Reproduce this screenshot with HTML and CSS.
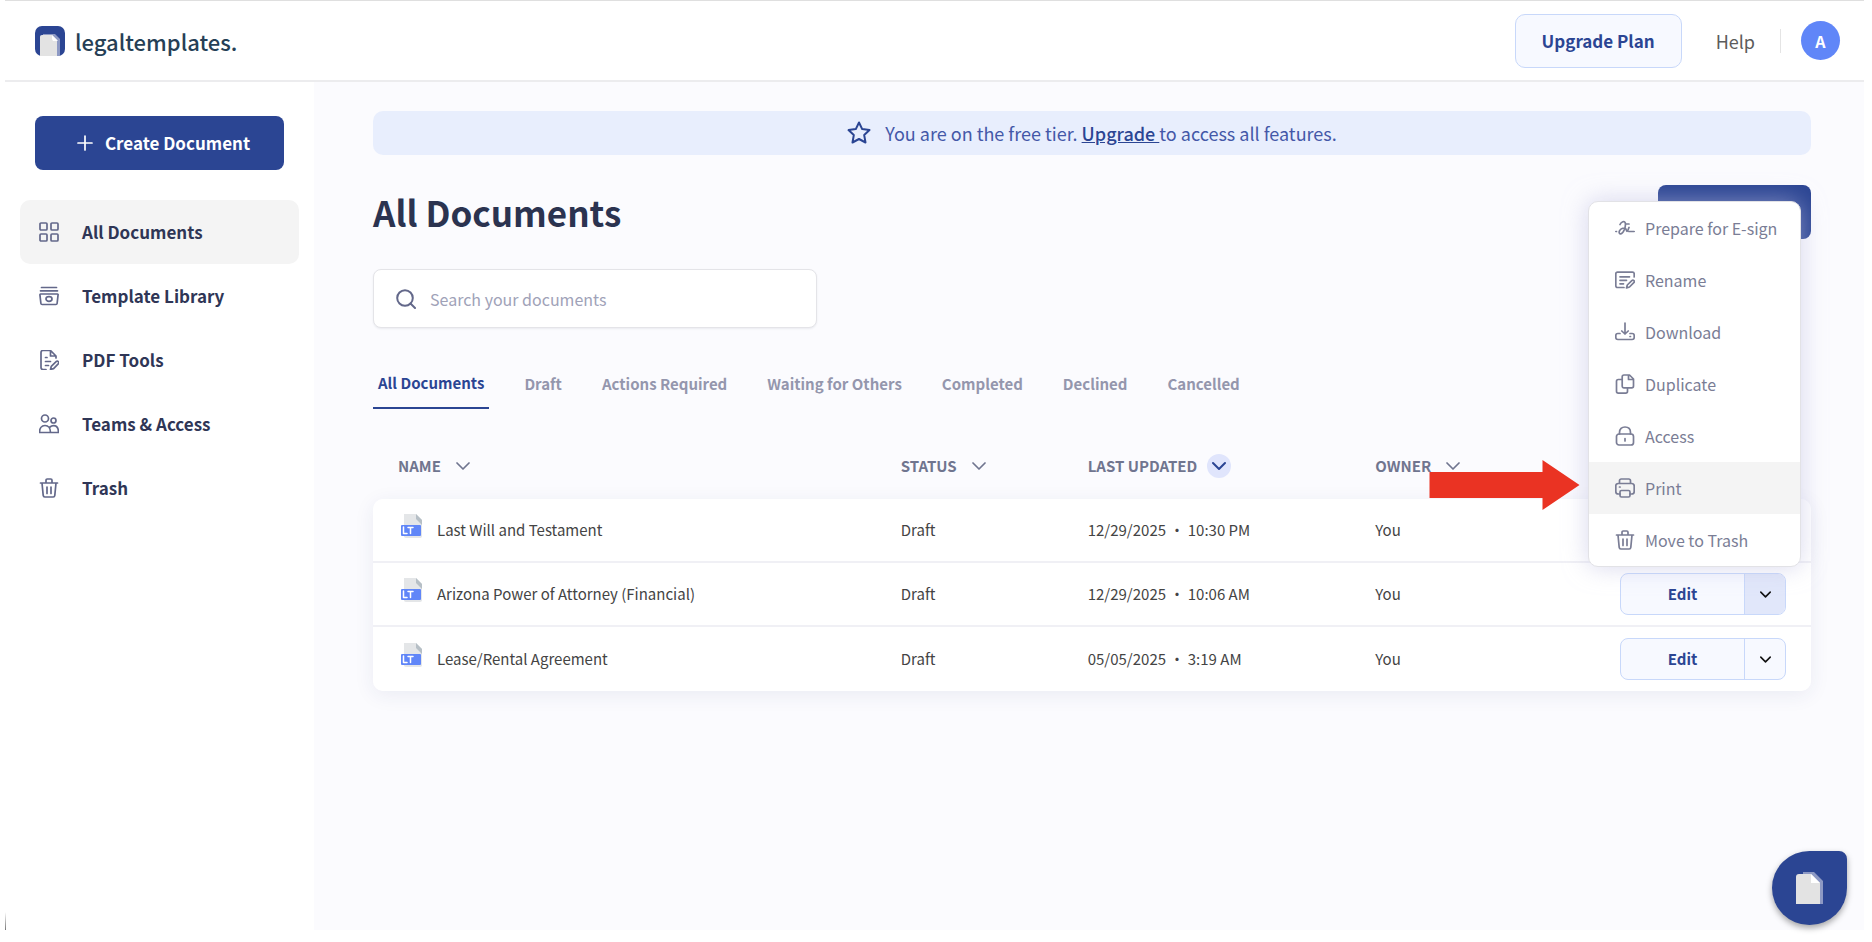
FILE: index.html
```html
<!DOCTYPE html>
<html lang="en">
<head>
    <meta charset="UTF-8">
    <meta name="viewport" content="width=device-width, initial-scale=1.0">
    <title>All Documents - legaltemplates.</title>
    <link rel="stylesheet" href="styles.css">
</head>
<body>

    <!-- Shared icons -->
    <svg class="sprite" aria-hidden="true">
        <symbol id="icon-chevron" viewBox="0 0 14 14"><path d="M1 4l6 6 6-6"/></symbol>
        <symbol id="icon-trash" viewBox="0 0 20 20"><path d="M1.5 5h17M3 5l1.2 12.4c.1.9.7 1.6 1.6 1.6h8.4c.9 0 1.500-.7 1.600-1.600L17 5M7 5V2.300C7 1.500 7.500 1 8.200 1h3.600c.7 0 1.200.5 1.200 1.300V5M8 9v6.500M12 9v6.500"/></symbol>
        <symbol id="icon-file" viewBox="0 0 24 26">
            <path d="M4 1h12l6 6v16c0 1-.6 2-2 2H6c-1.400 0-2-1-2-2z" fill="#e4e6e8"/>
            <path d="M16 1l6 6v5l-6-6z" fill="#b6bfc6"/>
            <rect x="1" y="12" width="20" height="11" rx="1" fill="#6086f8"/>
            <path d="M3.500 14v6.500h3.500M8 14.500h5M10.500 14.500v6" fill="none" stroke="#fff" stroke-width="1.500"/>
        </symbol>
    </svg>

    <div class="app">
        <header class="header">
            <a href="#" class="logo">
                <svg class="logo-icon" viewBox="0 0 30 30">
                    <rect width="30" height="30" rx="7" fill="#2b4593"/>
                    <path d="M8 8h12l5 5v17H8z" fill="#8d99c4"/>
                    <path d="M7 9h10l5 5v16H5V11c0-1.300.7-2 2-2z" fill="#e3e3e3"/>
                    <path d="M17 9l6 6h-5l-1-2z" fill="#fff"/>
                </svg>
                legaltemplates.
            </a>
            <div class="header-actions">
                <button type="button" class="btn-upgrade">Upgrade Plan</button>
                <a href="#" class="help">Help</a>
                <button type="button" class="avatar" aria-label="Account">A</button>
            </div>
        </header>

        <div class="layout">
            <aside class="sidebar">
                <button type="button" class="btn-create">
                    <svg viewBox="0 0 16 16"><path d="M8 1v14M1 8h14"/></svg>
                    Create Document
                </button>
                <nav class="nav">
                    <a href="#" class="nav-item active">
                        <svg viewBox="0 0 20 20"><rect x="1" y="1" width="7" height="7" rx="1"/><rect x="12" y="1" width="7" height="7" rx="1"/><rect x="1" y="12" width="7" height="7" rx="1"/><rect x="12" y="12" width="7" height="7" rx="1"/></svg>
                        All Documents
                    </a>
                    <a href="#" class="nav-item">
                        <svg viewBox="0 0 20 20"><path d="M2.500 1.500h15M1.500 4.800h17M1.500 8h17c.4 0 .7.300.600.700l-1 8.800c-.1.700-.5 1-1.200 1H3.100c-.7 0-1.100-.3-1.200-1l-1-8.800c0-.4.200-.7.600-.7z"/><ellipse cx="10" cy="13" rx="3" ry="2.300"/></svg>
                        Template Library
                    </a>
                    <a href="#" class="nav-item">
                        <svg viewBox="0 0 20 20"><path d="M7 19.500H4c-1 0-2-.8-2-2V2.500c0-1.200.8-2 2-2h7.500l5.500 5.500v2M11.500.500V6H17M6.500 7.500h1.500M6.500 11.500h5M6.500 15.500h3M11.500 19.500l.8-3.200 4.800-4.600c.7-.7 1.700-.6 2.200 0 .6.600.5 1.500-.1 2.200l-4.600 4.700z"/></svg>
                        PDF Tools
                    </a>
                    <a href="#" class="nav-item">
                        <svg viewBox="0 0 20 20"><circle cx="6" cy="4.500" r="3.500"/><circle cx="14.500" cy="6.500" r="2.500"/><path d="M.5 18.500c0-4 2-7 5.500-7s5.500 3 5.500 7zM11 13c1-.9 2-1.300 3.500-1.300 3 0 5 2.500 5 6.800h-8"/></svg>
                        Teams &amp; Access
                    </a>
                    <a href="#" class="nav-item">
                        <svg><use href="#icon-trash"/></svg>
                        Trash
                    </a>
                </nav>
            </aside>

            <main class="main">
                <div class="banner">
                    <svg viewBox="0 0 24 24"><path d="M12 1.500l3.200 6.600 7.300 1-5.300 5 1.300 7.400L12 18l-6.500 3.500 1.300-7.400-5.300-5 7.300-1z"/></svg>
                    <p>You are on the free tier. <a href="#">Upgrade </a>to access all features.</p>
                </div>

                <div class="title-row">
                    <h1>All Documents</h1>
                    <button type="button" class="btn-new" aria-label="Create"></button>
                </div>

                <label class="search">
                    <svg viewBox="0 0 20 20"><circle cx="9" cy="9" r="7.800"/><path d="M14.500 14.500l4.500 4.500"/></svg>
                    <input type="search" placeholder="Search your documents" aria-label="Search your documents">
                </label>

                <div class="tabs">
                    <button type="button" class="tab active">All Documents</button>
                    <button type="button" class="tab">Draft</button>
                    <button type="button" class="tab">Actions Required</button>
                    <button type="button" class="tab">Waiting for Others</button>
                    <button type="button" class="tab">Completed</button>
                    <button type="button" class="tab">Declined</button>
                    <button type="button" class="tab">Cancelled</button>
                </div>

                <table class="documents">
                    <thead>
                        <tr>
                            <th class="col-name"><button type="button" class="sort">NAME <span><svg><use href="#icon-chevron"/></svg></span></button></th>
                            <th class="col-status"><button type="button" class="sort">STATUS <span><svg><use href="#icon-chevron"/></svg></span></button></th>
                            <th class="col-updated"><button type="button" class="sort sorted">LAST UPDATED <span><svg><use href="#icon-chevron"/></svg></span></button></th>
                            <th><button type="button" class="sort">OWNER <span><svg><use href="#icon-chevron"/></svg></span></button></th>
                            <th class="col-actions"></th>
                        </tr>
                    </thead>
                    <tbody>
                        <tr>
                            <td><div class="doc"><svg><use href="#icon-file"/></svg>Last Will and Testament</div></td>
                            <td>Draft</td>
                            <td>12/29/2025 · 10:30 PM</td>
                            <td>You</td>
                            <td>
                                <div class="split">
                                    <button type="button" class="edit">Edit</button>
                                    <button type="button" class="more" aria-label="More"><svg><use href="#icon-chevron"/></svg></button>
                                </div>
                            </td>
                        </tr>
                        <tr>
                            <td><div class="doc"><svg><use href="#icon-file"/></svg>Arizona Power of Attorney (Financial)</div></td>
                            <td>Draft</td>
                            <td>12/29/2025 · 10:06 AM</td>
                            <td>You</td>
                            <td>
                                <div class="split">
                                    <button type="button" class="edit">Edit</button>
                                    <button type="button" class="more open" aria-label="More"><svg><use href="#icon-chevron"/></svg></button>
                                    <div class="menu">
                                        <button type="button" class="menu-item">
                                            <svg viewBox="0 0 20 20"><path d="M.8 13.500h.7M5 6.500C6.200 4 9.600 2.200 10.300 5c.8 3.800-2 10.500-4.500 10.800-2.800.2-2.300-5.300 4-5.800 2 0 1 3.300 2.200 3.300S13 11 14 9.500M11.500 6h2.500M14 13.500h5.200"/></svg>
                                            Prepare for E-sign
                                        </button>
                                        <button type="button" class="menu-item">
                                            <svg viewBox="0 0 20 20"><path d="M9 17.500H2.500c-1 0-1.700-.7-1.700-1.700v-12c0-1 .7-1.700 1.700-1.700h15c1 0 1.700.7 1.700 1.700V7M5 6.800h9.500M5 10.300h6.500M5 13.800h3.500M11.500 18l.8-3 4.500-4.300c.7-.6 1.500-.6 2.100 0 .6.600.5 1.400-.1 2L14.500 17z"/></svg>
                                            Rename
                                        </button>
                                        <button type="button" class="menu-item">
                                            <svg viewBox="0 0 20 20"><path d="M10 1v11M6.800 9l3.200 3 3.200-3M5 11.500H2.800c-1.200 0-2 .8-2 2v2c0 1.200.8 2 2 2h14.400c1.200 0 2-.8 2-2v-2c0-1.200-.8-2-2-2H15M15 14.500h.500"/></svg>
                                            Download
                                        </button>
                                        <button type="button" class="menu-item">
                                            <svg viewBox="0 0 20 20"><path d="M9 1h5.500l4 4v7c0 1.100-.7 1.800-1.800 1.800H9c-1.100 0-1.800-.7-1.800-1.800V2.800C7.200 1.700 7.900 1 9 1zM13.500 1v4.500h5M7 5.500H3.300c-1.100 0-1.800.7-1.800 1.800v10c0 1.100.7 1.800 1.800 1.800h7.400c1.100 0 1.800-.7 1.800-1.800V14"/></svg>
                                            Duplicate
                                        </button>
                                        <button type="button" class="menu-item">
                                            <svg viewBox="0 0 20 20"><rect x="1.500" y="8" width="17" height="11" rx="2.500"/><path d="M4.500 8V6.500C4.500 3 6.800 1 10 1s5.500 2 5.500 5.500V8M10 12.500v2.500"/></svg>
                                            Access
                                        </button>
                                        <button type="button" class="menu-item selected">
                                            <svg viewBox="0 0 20 20"><path d="M4.500 5.500V2.800c0-1.100.7-1.800 1.800-1.800h7.400c1.100 0 1.800.7 1.800 1.800v2.700M5 16H3.300C1.700 16 .8 15.100.8 13.500V8c0-1.600.9-2.500 2.500-2.500h13.400c1.600 0 2.500.9 2.500 2.500v5.500c0 1.600-.9 2.500-2.500 2.500H15M4.500 9h.6"/><rect x="5" y="12.500" width="10" height="6.500" rx="1.500"/></svg>
                                            Print
                                            <svg class="pointer" viewBox="0 0 150 50"><path d="M0 12h113V0l37 25-37 25V38H0z"/></svg>
                                        </button>
                                        <button type="button" class="menu-item">
                                            <svg><use href="#icon-trash"/></svg>
                                            Move to Trash
                                        </button>
                                    </div>
                                </div>
                            </td>
                        </tr>
                        <tr>
                            <td><div class="doc"><svg><use href="#icon-file"/></svg>Lease/Rental Agreement</div></td>
                            <td>Draft</td>
                            <td>05/05/2025 · 3:19 AM</td>
                            <td>You</td>
                            <td>
                                <div class="split">
                                    <button type="button" class="edit">Edit</button>
                                    <button type="button" class="more" aria-label="More"><svg><use href="#icon-chevron"/></svg></button>
                                </div>
                            </td>
                        </tr>
                    </tbody>
                </table>
            </main>
        </div>

        <button type="button" class="chat" aria-label="Chat">
            <svg viewBox="0 0 30 32">
                <path d="M8 0h11l9 9v23H8z" fill="#8d99c4"/>
                <path d="M4 2h12l9 9v21H1V5c0-2 1-3 3-3z" fill="#e3e3e3"/>
                <path d="M16 2l9 9h-9z" fill="#fff"/>
            </svg>
        </button>
    </div>

</body>
</html>
```

FILE: styles.css
```css
* {
    box-sizing: border-box;
}
body {
    margin: 0;
    padding: 0 8px 12px 5px;
    font-family: "Noto Sans CJK SC", "Noto Sans", sans-serif;
    font-size: 16px;
    line-height: 24px;
    color: #444;
    background-color: #fff;
}
button {
    padding: 0;
    border: 0;
    background: none;
    font: inherit;
    color: inherit;
    cursor: pointer;
}
a {
    color: inherit;
    text-decoration: none;
}
svg {
    flex-shrink: 0;
    fill: none;
    stroke: currentColor;
    stroke-width: 1.7;
    stroke-linecap: round;
    stroke-linejoin: round;
}
.sprite {
    display: none;
}
.app {
    position: relative;
    display: flex;
    flex-direction: column;
    min-height: calc(100vh - 12px);
    border-top: 1px solid #dfdfdf;
}
.app::before {
    content: "";
    position: absolute;
    left: 0;
    bottom: 0;
    width: 1px;
    height: 18px;
    background: linear-gradient(transparent, #777);
}

/* Header */
.header {
    display: flex;
    align-items: center;
    justify-content: space-between;
    height: 81px;
    padding: 0 24px 0 30px;
    border-bottom: 2px solid #ececee;
}
.logo {
    display: flex;
    align-items: center;
    gap: 10px;
    font-size: 22px;
    font-weight: 500;
    color: #263f56;
}
.logo-icon {
    width: 30px;
    height: 30px;
    stroke: none;
}
.header-actions {
    display: flex;
    align-items: center;
}
.btn-upgrade {
    height: 54px;
    padding: 0 26px;
    border: 1px solid #c8d8fa;
    border-radius: 10px;
    background-color: #f7f9ff;
    font-size: 17px;
    font-weight: 700;
    color: #2b4593;
}
.help {
    margin-left: 34px;
    padding-right: 25px;
    border-right: 1px solid #e4e4e4;
    font-size: 18px;
    color: #5c5c5c;
}
.avatar {
    width: 39px;
    height: 39px;
    margin-left: 20px;
    border-radius: 50%;
    background-color: #6086f8;
    font-weight: 700;
    color: #fff;
}

/* Sidebar */
.layout {
    display: flex;
    flex: 1;
}
.sidebar {
    width: 309px;
    padding: 34px 15px;
}
.btn-create {
    display: flex;
    align-items: center;
    justify-content: center;
    gap: 12px;
    width: 249px;
    height: 54px;
    margin: 0 15px 30px;
    padding-left: 8px;
    border-radius: 8px;
    background-color: #2b4593;
    font-size: 17px;
    font-weight: 700;
    color: #fff;
}
.btn-create svg {
    width: 16px;
    height: 16px;
}
.nav-item {
    display: flex;
    align-items: center;
    gap: 23px;
    height: 64px;
    padding: 0 19px;
    border-radius: 10px;
    font-size: 17px;
    font-weight: 700;
    color: #2f3656;
}
.nav-item.active {
    background-color: #f4f4f4;
}
.nav-item svg {
    width: 20px;
    height: 20px;
    color: #63688a;
}

/* Main content */
.main {
    flex: 1;
    padding: 29px 53px 60px 59px;
    background-color: #fbfbfe;
}
.banner {
    display: flex;
    align-items: center;
    justify-content: center;
    gap: 14px;
    height: 44px;
    border-radius: 10px;
    background-color: #e8eefd;
    font-size: 18px;
    color: #4458a8;
}
.banner svg {
    width: 24px;
    height: 24px;
    stroke-width: 2;
    color: #2b4593;
}
.banner p {
    margin: 0;
}
.banner a {
    font-weight: 500;
    text-decoration: underline;
    white-space: pre;
    color: #2b4593;
}
.title-row {
    display: flex;
    align-items: center;
    justify-content: space-between;
    margin: 30px 0;
}
h1 {
    margin: 0;
    font-size: 35px;
    line-height: 52px;
    font-weight: 700;
    color: #2b3350;
}
.btn-new {
    width: 153px;
    height: 54px;
    border-radius: 8px;
    background-color: #2b4593;
}
.search {
    display: flex;
    align-items: center;
    gap: 14px;
    width: 444px;
    height: 59px;
    padding: 0 22px;
    border: 1px solid #e4e4e8;
    border-radius: 8px;
    background-color: #fff;
    box-shadow: 0 1px 2px rgba(43, 51, 80, 0.08);
}
.search svg {
    width: 20px;
    height: 20px;
    stroke-width: 2;
    color: #63688a;
}
.search input {
    flex: 1;
    min-width: 0;
    padding: 0;
    border: 0;
    outline: 0;
    background: none;
    font: inherit;
}
.search input::placeholder {
    color: #a0a2b8;
}
.tabs {
    display: flex;
    gap: 30px;
    margin-top: 30px;
}
.tab {
    height: 51px;
    padding: 0 5px;
    font-size: 15px;
    font-weight: 700;
    color: #9496ad;
}
.tab.active {
    border-bottom: 2px solid #2b4593;
    color: #2b4593;
}

/* Documents table */
.documents {
    width: 100%;
    margin-top: 28px;
    border-spacing: 0;
    table-layout: fixed;
    font-size: 15px;
}
.documents th,
.documents td {
    padding: 0;
    text-align: left;
}
.documents th:first-child,
.documents td:first-child {
    padding-left: 25px;
}
.documents th {
    height: 62px;
    padding-bottom: 4px;
}
.col-name {
    width: 36.7%;
}
.col-status {
    width: 13%;
}
.col-updated {
    width: 20%;
}
.col-actions {
    width: 191px;
}
.sort {
    display: flex;
    align-items: center;
    gap: 10px;
    font-weight: 700;
    color: #70758f;
}
.sort span {
    display: flex;
    align-items: center;
    justify-content: center;
    width: 24px;
    height: 24px;
    border-radius: 50%;
}
.sort svg {
    width: 14px;
    height: 14px;
}
.sort.sorted span {
    background-color: #e0e5fc;
    color: #2b4593;
}
.sort.sorted svg {
    stroke-width: 2;
}
.documents tbody {
    border-radius: 10px;
    box-shadow: 0 4px 20px rgba(43, 51, 110, 0.08);
}
.documents td {
    height: 64px;
    border-bottom: 2px solid #f0f0f5;
    background-color: #fff;
}
.documents tr:last-child td {
    border-bottom: 0;
}
.documents tr:first-child td:first-child {
    border-top-left-radius: 10px;
}
.documents tr:first-child td:last-child {
    border-top-right-radius: 10px;
}
.documents tr:last-child td:first-child {
    border-bottom-left-radius: 10px;
}
.documents tr:last-child td:last-child {
    border-bottom-right-radius: 10px;
}
.doc {
    display: flex;
    align-items: center;
    gap: 13px;
}
.doc svg {
    width: 24px;
    height: 26px;
    margin-left: 2px;
    margin-bottom: 8px;
    stroke: none;
}
.split {
    position: relative;
    display: flex;
    width: 166px;
    height: 42px;
    border: 1px solid #c8d8fa;
    border-radius: 8px;
    background-color: #f7f9ff;
}
.edit {
    flex: 1;
    font-weight: 700;
    color: #2b4593;
}
.more {
    display: flex;
    align-items: center;
    justify-content: center;
    width: 41px;
    border-left: 1px solid #c8d8fa;
    border-radius: 0 7px 7px 0;
    color: #111;
}
.more.open {
    background-color: #e1e7fa;
}
.more svg {
    width: 11px;
    height: 11px;
    stroke-width: 2;
}

/* Row menu */
.menu {
    position: absolute;
    right: -16px;
    bottom: 47px;
    z-index: 10;
    width: 213px;
    border: 1px solid #e2e2e6;
    border-radius: 10px;
    background-color: #fff;
    font-size: 16px;
    box-shadow: 0 0 24px rgba(190, 190, 225, 0.6);
}
.menu-item {
    position: relative;
    display: flex;
    align-items: center;
    gap: 10px;
    width: 100%;
    height: 52px;
    padding: 0 26px;
    white-space: nowrap;
    color: #7a7d95;
}
.menu-item svg {
    width: 20px;
    height: 20px;
}
.menu-item.selected {
    background-color: #f4f4f4;
}
.menu-item .pointer {
    position: absolute;
    top: -2px;
    right: 220px;
    width: 151px;
    height: 50px;
    fill: #ea3323;
    stroke: none;
}

/* Chat bubble */
.chat {
    position: absolute;
    right: 17px;
    bottom: 5px;
    display: flex;
    align-items: center;
    justify-content: center;
    width: 75px;
    height: 74px;
    border-radius: 50% 8px 50% 50%;
    background-color: #2b4593;
    box-shadow: 0 3px 6px rgba(0, 0, 0, 0.35);
}
.chat svg {
    width: 30px;
    height: 32px;
    stroke: none;
}
```
